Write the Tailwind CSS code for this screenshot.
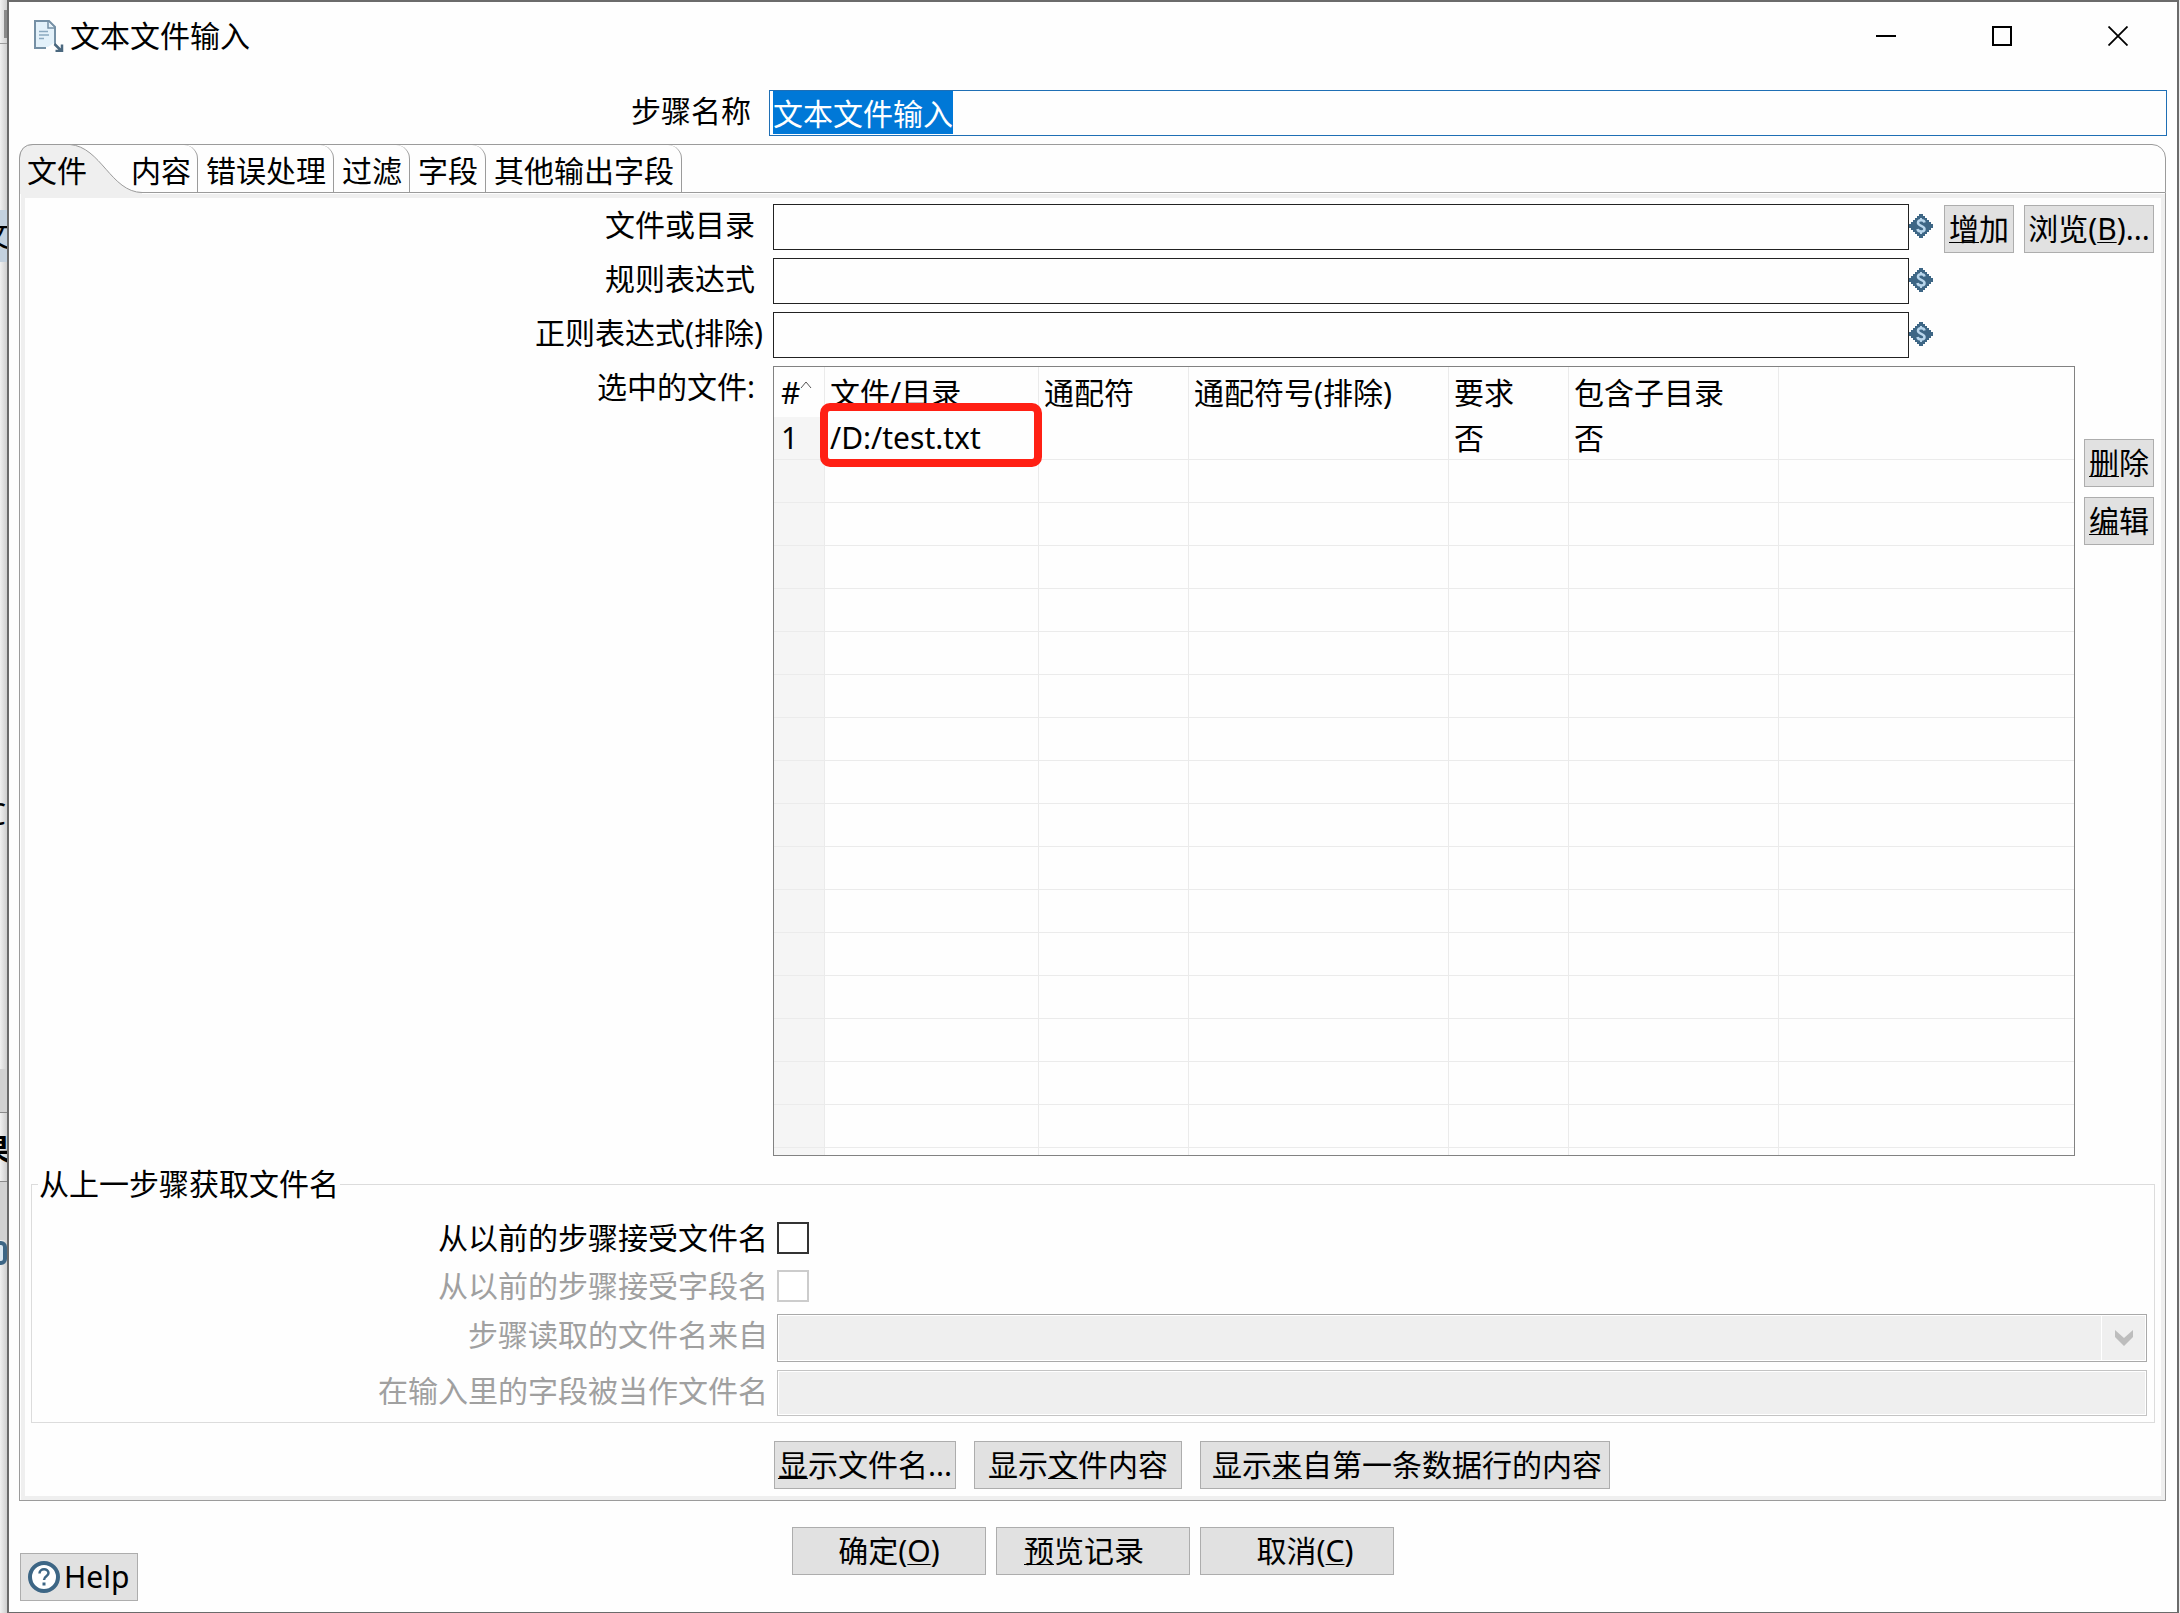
<!DOCTYPE html>
<html lang="zh-CN">
<head>
<meta charset="utf-8">
<title>文本文件输入</title>
<script src="https://cdn.jsdelivr.net/npm/@tailwindcss/browser@4"></script>
</head>
<body class="relative flex min-h-screen bg-[#ececec] font-['Noto_Sans','Noto_Sans_CJK_SC',sans-serif] text-[30px] leading-[42px] text-black">
<svg width="0" height="0" class="absolute">
  <symbol id="var" viewBox="0 0 24 24">
    <path d="M10 0h4v2h2v2h2v2h2v2h2v2h2v4h-2v2h-2v2h-2v2h-2v2h-2v2h-4v-2H8v-2H6v-2H4v-2H2v-2H0v-4h2V8h2V6h2V4h2V2h2z" fill="#3d6685"/>
    <path d="M15.500 8.500C15 5.500 9 5.500 9 8.800c0 3.400 6.500 2.600 6.500 6.200 0 3.300-6.500 3.300-7 0" fill="none" stroke="#b9d6ec" stroke-width="2.500"/>
    <path d="M12 4v3M12 17v3" stroke="#b9d6ec" stroke-width="2"/>
  </symbol>
</svg>

<!-- sliver of the window behind -->
<div aria-hidden="true" class="relative w-[7px] shrink-0 overflow-hidden bg-linear-to-r from-[#f1f1f1] to-[#cfcfcf]">
  <div class="absolute left-1 top-2.5 h-7 w-1 bg-[#8a8a8a]"></div>
  <div class="absolute left-0 top-[43px] h-px w-2 bg-[#9b9b9b]"></div>
  <div class="absolute left-0 top-[210px] h-[52px] w-2 bg-[#c3d1de]"></div>
  <div class="absolute -left-5 top-[214px]">文</div>
  <div class="absolute -left-[13px] top-[793px]">C</div>
  <div class="absolute left-0 top-[1069px] h-[43px] w-2 bg-[#d2d2d2]"></div>
  <div class="absolute left-0 top-[1112px] h-[70px] w-2 border-y border-[#8a8a8a]"></div>
  <div class="absolute -left-5 top-[1128px] font-bold">果</div>
  <div class="absolute left-0 top-[1182px] h-[58px] w-2 bg-[#d2d2d2]"></div>
  <div class="absolute -left-4 top-[1241px] h-6 w-[23px] rounded-md border-4 border-[#3d6685] bg-[#dbe8f2]"></div>
</div>

<main class="mr-px flex min-w-0 flex-1 flex-col border-2 border-b border-[#6b6b6b] bg-[#fefefe]">
  <header class="flex h-[68px] items-center pl-[25px]">
    <svg class="h-8 w-8 shrink-0" viewBox="0 0 32 32">
      <path d="M1 1h14l6 6v18M1 0v28h11" fill="none" stroke="#7590a5" stroke-width="2"/>
      <path d="M2 2h12l6 6v15l-6 4H2z" fill="#e3f1fa"/>
      <path d="M14 1v7h7" fill="none" stroke="#7590a5" stroke-width="1.500"/>
      <path d="M5 11.500h9M5 15h10M5 18.500h5" stroke="#8aa9c0" stroke-width="1.500"/>
      <path d="M20.500 24l6 6M28 24.500V31h-6.500" fill="none" stroke="#4b687f" stroke-width="2.500"/>
    </svg>
    <h1 class="ml-1">文本文件输入</h1>
    <div class="ml-auto mr-[49px] flex gap-24">
      <button aria-label="最小化" class="h-5 w-5"><svg viewBox="0 0 20 20"><path d="M0 10h20" stroke="#000" stroke-width="2"/></svg></button>
      <button aria-label="最大化" class="h-5 w-5"><svg viewBox="0 0 20 20"><path d="M1 1h18v18H1z" fill="none" stroke="#000" stroke-width="2"/></svg></button>
      <button aria-label="关闭" class="h-5 w-5"><svg viewBox="0 0 20 20"><path d="M0.500 0.500l19 19M19.500 0.500l-19 19" stroke="#000" stroke-width="1.800"/></svg></button>
    </div>
  </header>

  <div class="flex pt-5 pr-[10px]">
    <label for="step" class="w-[760px] shrink-0 pr-[18px] text-right">步骤名称</label>
    <input id="step" value="文本文件输入" class="h-[46px] min-w-0 flex-1 border border-[#1f6fb5] bg-[#fefefe] pb-0.5 pl-[3px] leading-10 outline-none selection:bg-[#0078d7] selection:text-white">
  </div>

  <section class="mt-2 mr-[11px] ml-[10px]">
    <div role="tablist" class="relative flex h-[49px] rounded-t-[14px] border border-[#9b9b9b]">
      <svg class="absolute -top-px -left-px h-[50px] w-[125px]" viewBox="0 0 125 50">
        <path d="M0.500 50V14Q1.500 0.500 14 0.500H51C82 3 92 48 123 48.500V50z" fill="#efefef"/>
        <path d="M0.500 50V14Q1.500 0.500 14 0.500H51C82 3 92 48 123 48.500" fill="none" stroke="#9b9b9b"/>
      </svg>
      <button role="tab" aria-selected="true" class="relative w-[101px] pt-1 pl-[7px] text-left">文件</button>
      <button role="tab" class="rounded-tr-[14px] border-r border-[#9b9b9b] pt-1 pr-1.5 pl-[10px]">内容</button>
      <button role="tab" class="rounded-tr-[14px] border-r border-[#9b9b9b] pt-1 pr-[7px] pl-2">错误处理</button>
      <button role="tab" class="rounded-tr-[14px] border-r border-[#9b9b9b] pt-1 pr-[7px] pl-2">过滤</button>
      <button role="tab" class="rounded-tr-[14px] border-r border-[#9b9b9b] pt-1 pr-[7px] pl-2">字段</button>
      <button role="tab" class="rounded-tr-[14px] border-r border-[#9b9b9b] pt-1 pr-[7px] pl-2">其他输出字段</button>
    </div>

    <div class="border-x border-b border-[#9b9b9b] pt-px pl-px">
      <div class="border-4 border-[#efefef]">
        <div class="grid auto-rows-[46px] grid-cols-[748px_1fr_24px_228px] gap-y-2 pt-1.5">
          <label for="path" class="pr-[18px] text-right">文件或目录</label>
          <input id="path" class="min-w-0 border border-[#222] bg-[#fefefe] px-1">
          <svg class="mt-2.5 h-6 w-6"><use href="#var"/></svg>
          <div class="flex gap-[10px] pt-px pl-[11px]">
            <button class="h-12 w-[70px] border border-[#adadad] bg-[#e1e1e1]"><u class="underline-offset-2 decoration-1">增</u>加</button>
            <button class="h-12 w-[130px] border border-[#adadad] bg-[#e1e1e1] whitespace-nowrap">浏览(<u class="underline-offset-2 decoration-1">B</u>)...</button>
          </div>
          <label for="rule" class="pr-[18px] text-right">规则表达式</label>
          <input id="rule" class="min-w-0 border border-[#222] bg-[#fefefe] px-1">
          <svg class="mt-2.5 h-6 w-6"><use href="#var"/></svg>
          <div></div>
          <label for="excl" class="pr-[10px] text-right">正则表达式(排除)</label>
          <input id="excl" class="min-w-0 border border-[#222] bg-[#fefefe] px-1">
          <svg class="mt-2.5 h-6 w-6"><use href="#var"/></svg>
          <div></div>
        </div>

        <div class="flex pt-2">
          <div class="w-[748px] shrink-0 pr-[18px] text-right">选中的文件:</div>
          <div class="relative h-[790px] min-w-0 flex-1 overflow-hidden border border-[#828282]">
            <table class="w-full table-fixed border-separate border-spacing-0 text-left">
              <colgroup><col class="w-[51px]"><col class="w-[214px]"><col class="w-[150px]"><col class="w-[260px]"><col class="w-[120px]"><col class="w-[210px]"><col></colgroup>
              <thead>
                <tr class="h-[50px] *:border-r *:border-[#ebebeb] *:pt-0.5 *:pl-[5px] *:font-normal *:whitespace-nowrap *:last:border-r-0">
                  <th><span class="flex items-start pl-0.5">#<svg class="mt-2 h-3 w-3" viewBox="0 0 12 12"><path d="M1 8l5-6 5 6" fill="none" stroke="#555"/></svg></span></th>
                  <th>文件/目录</th><th>通配符</th><th>通配符号(排除)</th><th>要求</th><th>包含子目录</th><th></th>
                </tr>
              </thead>
              <tbody id="rows">
                <tr class="h-[43px] *:border-r *:border-b *:border-[#ebebeb] *:pl-[5px] *:last:border-r-0">
                  <td class="bg-[#f5f5f5]"><span class="pl-0.5">1</span></td><td>/D:/test.txt</td><td></td><td></td><td>否</td><td>否</td><td></td>
                </tr>
              </tbody>
            </table>
            <div class="absolute top-[36px] left-[46px] h-16 w-[222px] rounded-[10px] border-8 border-[#ff2014]"></div>
          </div>
          <div class="flex w-[86px] shrink-0 flex-col gap-[10px] pt-[73px] pl-[9px]">
            <button class="h-12 w-[70px] border border-[#adadad] bg-[#e1e1e1]"><u class="underline-offset-2 decoration-1">删</u>除</button>
            <button class="h-12 w-[70px] border border-[#adadad] bg-[#e1e1e1]"><u class="underline-offset-2 decoration-1">编</u>辑</button>
          </div>
        </div>

        <fieldset class="mx-1.5 mt-1.5 border border-[#dcdcdc] pr-[7px] pb-1.5">
          <legend class="ml-1.5 h-11 px-px leading-[44px]">从上一步骤获取文件名</legend>
          <div class="grid grid-cols-[745px_1fr] pt-4">
            <label for="accept" class="h-12 pr-[9px] text-right leading-8">从以前的步骤接受文件名</label>
            <input id="accept" type="checkbox" class="h-8 w-8 appearance-none border-2 border-[#333] bg-white">
            <label for="pass" class="h-11 pr-[9px] text-right leading-8 text-[#a0a0a0]">从以前的步骤接受字段名</label>
            <input id="pass" type="checkbox" disabled class="h-8 w-8 appearance-none border-2 border-[#ccc] bg-white">
            <label for="from" class="pr-[9px] text-right text-[#a0a0a0]">步骤读取的文件名来自</label>
            <div class="relative mb-2 h-12">
              <select id="from" disabled class="block h-12 w-full appearance-none border border-[#a9a9a9] bg-[#efefef] opacity-100 inset-ring inset-ring-white"></select>
              <div class="pointer-events-none absolute inset-y-px right-[2px] flex w-11 items-center justify-center border-l border-white">
                <svg class="h-[18px] w-[18px]" viewBox="0 0 18 18"><path d="M0 1l9 8 9-8v7l-9 9-9-9z" fill="#bdbdbd"/></svg>
              </div>
            </div>
            <label for="field" class="pr-[9px] text-right text-[#a0a0a0]">在输入里的字段被当作文件名</label>
            <input id="field" disabled class="h-[46px] min-w-0 border border-[#c4c4c4] bg-[#efefef] inset-ring inset-ring-white">
          </div>
        </fieldset>

        <div class="flex gap-[18px] pt-[18px] pb-[7px] pl-[749px] whitespace-nowrap">
          <button class="h-12 w-[182px] border border-[#adadad] bg-[#e1e1e1]"><u class="underline-offset-2 decoration-1">显</u>示文件名...</button>
          <button class="h-12 w-[208px] border border-[#adadad] bg-[#e1e1e1]">显示<u class="underline-offset-2 decoration-1">文</u>件内容</button>
          <button class="h-12 w-[410px] border border-[#adadad] bg-[#e1e1e1] pl-1">显示<u class="underline-offset-2 decoration-1">来</u>自第一条数据行的内容</button>
        </div>
      </div>
    </div>
  </section>

  <footer class="flex items-start pt-[26px] pb-[11px] pl-[11px]">
    <button class="mt-[26px] flex h-12 w-[118px] items-center gap-1 border border-[#adadad] bg-[#e1e1e1] pl-[7px]">
      <svg class="h-8 w-8 shrink-0" viewBox="0 0 32 32">
        <circle cx="16" cy="16" r="14" fill="#fff" stroke="#3d6685" stroke-width="4"/>
        <path d="M11.500 12.500c0-5.500 9-5.500 9-.5 0 3.500-4.500 3-4.500 7" fill="none" stroke="#3d6685" stroke-width="2.500"/>
        <path d="M14.500 21.500h3v3h-3z" fill="#3d6685"/>
      </svg>Help</button>
    <div class="flex gap-[10px] pl-[654px]">
      <button class="h-12 w-[194px] border border-[#adadad] bg-[#e1e1e1]">确定(<u class="underline-offset-2 decoration-1">O</u>)</button>
      <button class="h-12 w-[194px] border border-[#adadad] bg-[#e1e1e1] pr-[18px]"><u class="underline-offset-2 decoration-1">预</u>览记录</button>
      <button class="h-12 w-[194px] border border-[#adadad] bg-[#e1e1e1] pl-4">取消(<u class="underline-offset-2 decoration-1">C</u>)</button>
    </div>
  </footer>
</main>

<script>
  // Fill the grid with empty rows below the first one
  const rows = document.getElementById('rows');
  const first = rows.rows[0];
  for (let i = 0; i < 17; i++) {
    const row = first.cloneNode(true);
    for (const cell of row.cells) cell.textContent = '';
    rows.append(row);
  }
  const step = document.getElementById('step');
  step.focus();
  step.select();
</script>
</body>
</html>
